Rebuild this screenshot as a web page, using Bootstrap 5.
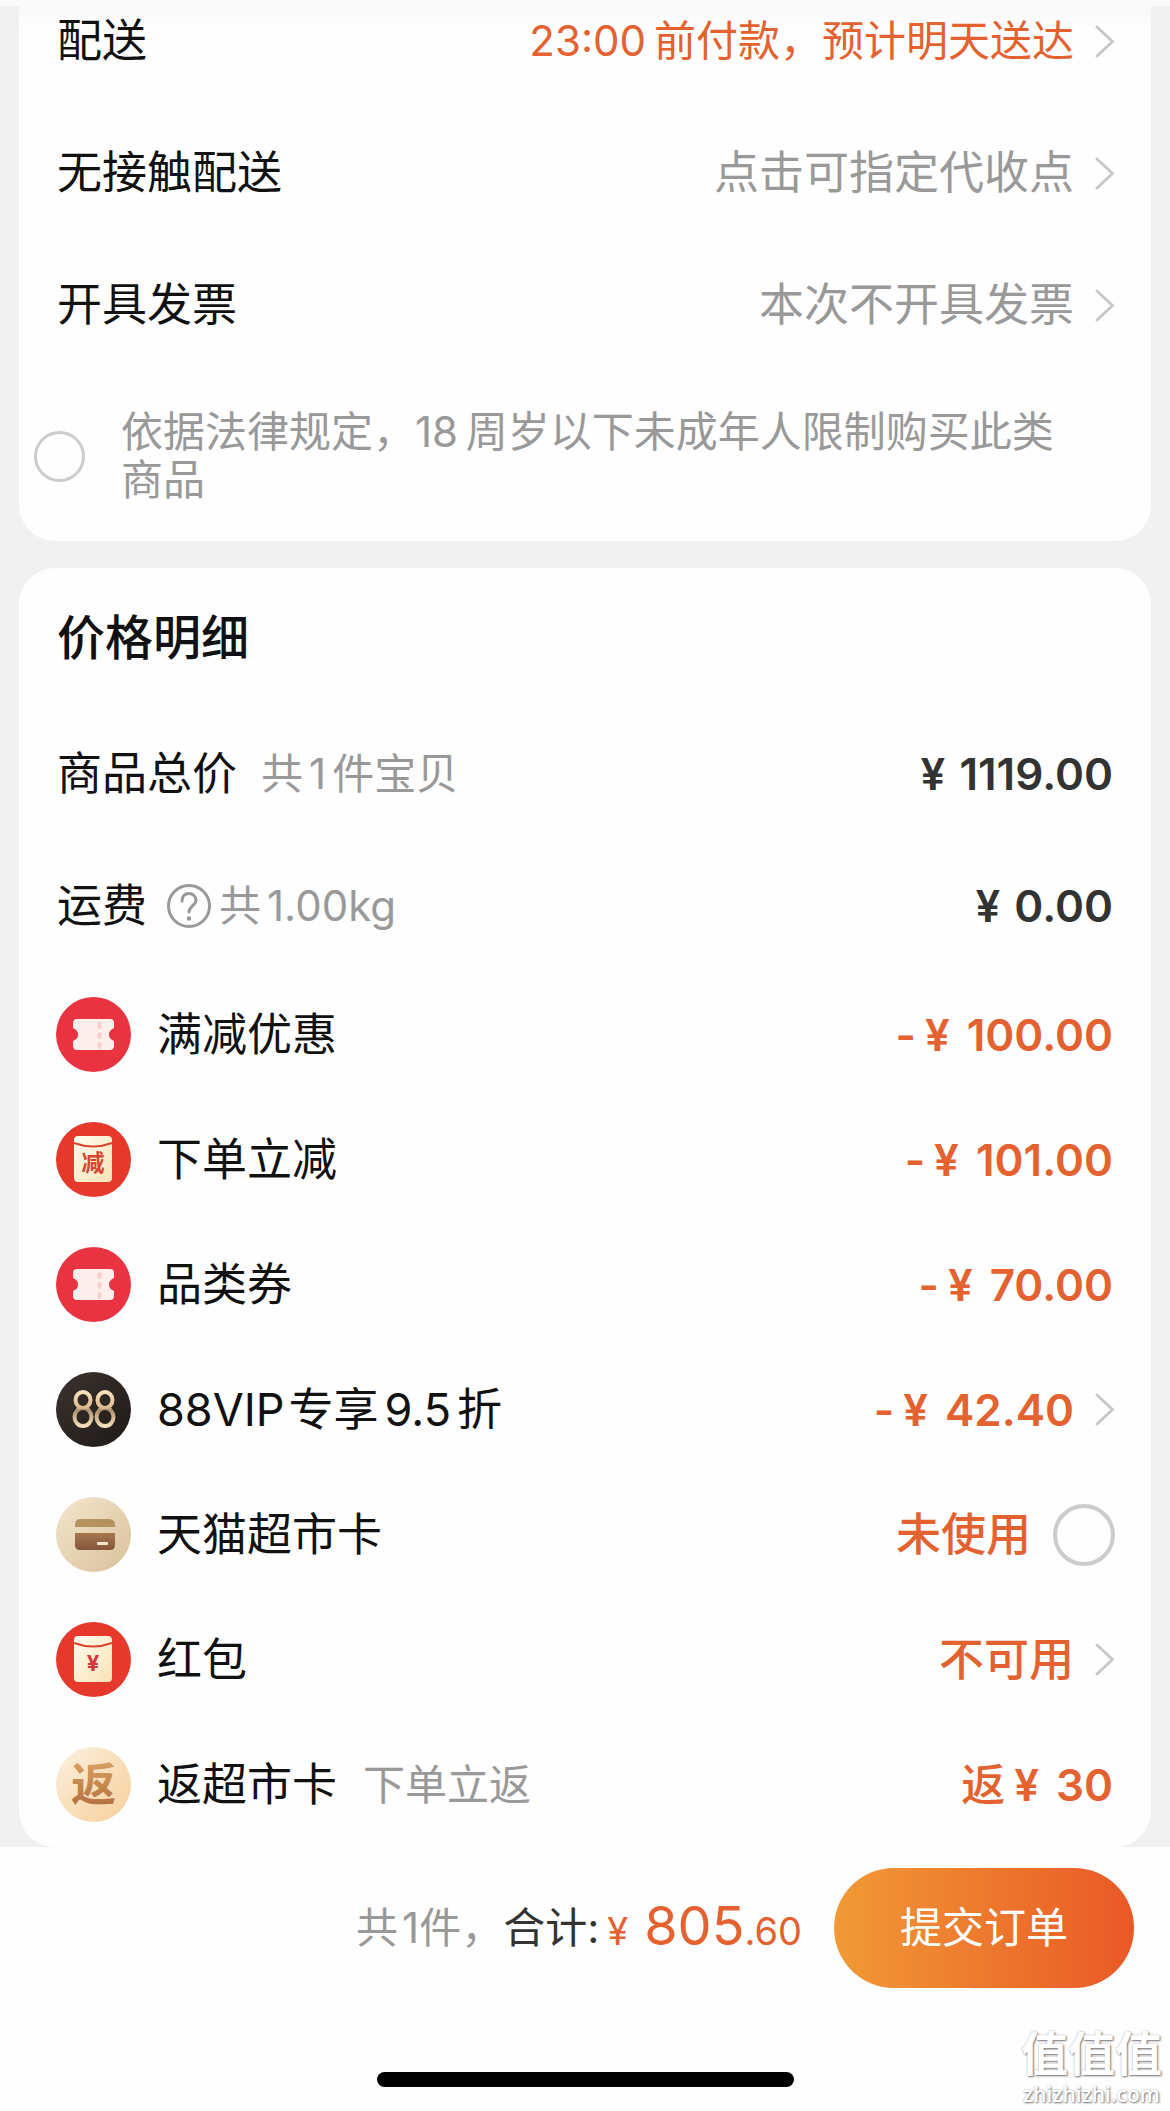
<!DOCTYPE html>
<html lang="zh-CN">
<head>
<meta charset="utf-8">
<meta name="viewport" content="width=device-width, initial-scale=1">
<title>确认订单</title>
<link href="https://cdn.jsdelivr.net/npm/bootstrap@5.3.0/dist/css/bootstrap.min.css" rel="stylesheet">
<style>
  :root { --accent: #e4622f; --muted: #999; --page: #f1f1f1; }
  body {
    font-family: Inter, "Noto Sans CJK SC", sans-serif;
    font-size: 45px; line-height: 70px; color: #111; background: #fefefe;
  }
  .top-strip { height: 6px; background: #fafafa; }
  .order-page { background: var(--page); padding: 0 19px; }
  .panel { background: #fefefe; border-radius: 36px; padding: 0 38px; }
  .panel-delivery {
    border-top-left-radius: 0; border-top-right-radius: 0; padding-bottom: 37px;
    background: linear-gradient(#f9f9f9, #fefefe 28px);
  }
  .panel-price { margin-top: 27px; padding-top: 35px; padding-bottom: 25px; }
  .stack-rows { display: grid; gap: 62px; }
  .stack-icons { display: grid; gap: 50px; margin-top: 56px; }
  .line-row { color: inherit; text-decoration: none; min-height: 70px; }
  .icon-row { min-height: 75px; gap: 26px; }
  .chev { width: 20px; height: 33px; margin-left: 21px; margin-right: -2px; flex: none; }
  .accent { color: var(--accent); }
  .muted { color: var(--muted); }
  .txt-md { font-size: 42px; }
  .num { margin: 0 6px; }
  .amount { font-size: 44px; font-weight: 600; }
  .amount .yen { margin: 0 17px 0 9px; }
  .amount.dark .yen { margin: 0 14px 0 0; }
  .state { font-weight: 500; }
  .dark { color: #333; }
  .round-icon { width: 75px; height: 75px; flex: none; margin-left: -1px; }
  .round-check {
    appearance: none; flex: none; width: 51px; height: 51px; margin: 0;
    border: 3px solid #ccc; border-radius: 50%; background: #fefefe;
  }
  .round-check:checked { background: var(--accent); }
  .round-check-lg { width: 62px; height: 62px; border-width: 4px; margin: 0 -2px 0 22px; }
  .age-row { margin: 68px 40px 0 -23px; gap: 36px; }
  .age-row label { font-size: 42px; line-height: 48px; }
  .panel-title { font-size: 48px; line-height: 70px; font-weight: 500; margin: 0 0 66px; }
  .help-btn { width: 44px; height: 44px; border: 0; padding: 0; margin-left: 20px; background: none; display: flex; }
  .pay-bar { padding: 21px 36px 0 0; gap: 32px; }
  .sum { font-size: 54px; }
  .small-sum { font-size: 38px; }
  .submit-btn {
    width: 300px; height: 120px; border: 0; border-radius: 60px; color: #fff;
    font-size: 42px; line-height: 60px;
    background: linear-gradient(90deg, #f19a36, #ea5826);
  }
  .bottom-zone { height: 122px; position: relative; }
  .home-bar { width: 417px; height: 15px; border-radius: 8px; background: #000; margin-top: 84px; }
  .site-mark {
    position: absolute; right: 8px; bottom: 2px; text-align: center; color: #fff;
    text-shadow: 1px 1px 2px #777, 0 0 2px #bbb;
  }
  .mark-cn { font-size: 47px; line-height: 52px; font-weight: 700; }
  .mark-en { font-family: "Open Sans", sans-serif; font-size: 21px; line-height: 28px; font-weight: 600; }
</style>
</head>
<body>
<svg class="position-absolute" width="0" height="0" aria-hidden="true">
  <defs>
    <linearGradient id="cream" x1="0" y1="0" x2="1" y2="1"><stop offset="0" stop-color="#fffdf0"/><stop offset="1" stop-color="#f8e2b4"/></linearGradient>
    <linearGradient id="black" x1="0" y1="0" x2="1" y2="1"><stop offset="0" stop-color="#3a322e"/><stop offset="1" stop-color="#1f1b18"/></linearGradient>
    <linearGradient id="gold" gradientUnits="userSpaceOnUse" x1="0" y1="19" x2="0" y2="55"><stop offset="0" stop-color="#fbe3bd"/><stop offset=".48" stop-color="#dcb98a"/><stop offset=".52" stop-color="#a98e6c"/><stop offset="1" stop-color="#fbe3bd"/></linearGradient>
    <linearGradient id="sand" x1="0" y1="0" x2="1" y2="1"><stop offset="0" stop-color="#f4e6cc"/><stop offset="1" stop-color="#d8c09b"/></linearGradient>
    <linearGradient id="brown" x1="0" y1="0" x2="0" y2="1"><stop offset="0" stop-color="#a67850"/><stop offset="1" stop-color="#85553c"/></linearGradient>
    <linearGradient id="peach" x1="0" y1="0" x2="1" y2="1"><stop offset="0" stop-color="#fbf0df"/><stop offset="1" stop-color="#f7cf9a"/></linearGradient>
    <linearGradient id="copper" x1="0" y1="0" x2="0" y2="1"><stop offset="0" stop-color="#dda465"/><stop offset="1" stop-color="#b06a3c"/></linearGradient>
    <symbol id="arrow" viewBox="0 0 20 33"><path d="M2 2 17.500 16.500 2 31" fill="none" stroke="#c8c8c8" stroke-width="3" stroke-linecap="round" stroke-linejoin="round"/></symbol>
    <symbol id="ticket" viewBox="0 0 75 75">
      <circle cx="37.500" cy="37.500" r="37.500" fill="#e93340"/>
      <path d="M21 22H54Q58 22 58 26V31Q53 33 53 37.500T58 44V49Q58 53 54 53H21Q17 53 17 49V44Q22 42 22 37.500T17 31V26Q17 22 21 22Z" fill="#fdf0ec"/>
      <path d="M43.500 27V50" stroke="#f9cdcb" stroke-width="4" stroke-linecap="round" stroke-dasharray="3 7"/>
    </symbol>
    <symbol id="envelope" viewBox="0 0 75 75">
      <circle cx="37.500" cy="37.500" r="37.500" fill="#e6382b"/>
      <rect x="18" y="14" width="38" height="46" rx="4" fill="url(#cream)"/>
      <path d="M18 21Q37 28 56 21" fill="none" stroke="#d9472f" stroke-width="2"/>
    </symbol>
  </defs>
</svg>

<div class="top-strip"></div>
<main class="order-page">
  <section class="panel panel-delivery">
    <div class="stack-rows">
      <a href="#" class="line-row d-flex align-items-center">
        <span class="me-auto">配送</span><span class="accent txt-md">23:00<span class="ms-2">前付款，预计明天送达</span></span><svg class="chev"><use href="#arrow"/></svg>
      </a>
      <a href="#" class="line-row d-flex align-items-center">
        <span class="me-auto">无接触配送</span><span class="muted">点击可指定代收点</span><svg class="chev"><use href="#arrow"/></svg>
      </a>
      <a href="#" class="line-row d-flex align-items-center">
        <span class="me-auto">开具发票</span><span class="muted">本次不开具发票</span><svg class="chev"><use href="#arrow"/></svg>
      </a>
    </div>
    <div class="age-row d-flex align-items-center">
      <input class="round-check" type="checkbox" id="age">
      <label class="muted" for="age">依据法律规定，18&thinsp;周岁以下未成年人限制购买此类商品</label>
    </div>
  </section>

  <section class="panel panel-price">
    <h2 class="panel-title">价格明细</h2>
    <div class="stack-rows">
      <div class="line-row d-flex align-items-center">
        <span>商品总价</span><span class="muted txt-md ms-4 me-auto">共<span class="num">1</span>件宝贝</span><span class="amount dark"><span class="yen">¥</span>1119.00</span>
      </div>
      <div class="line-row d-flex align-items-center">
        <span>运费</span>
        <button type="button" class="help-btn" aria-label="运费说明">
          <svg width="44" height="44" viewBox="0 0 44 44" fill="none" stroke="#999" stroke-width="3" stroke-linecap="round"><circle cx="22" cy="22" r="20.500"/><path d="M15 17C15 12 18 9.500 22 9.500S29 12.500 29 16.500C29 21 22 22 22 28"/><circle cx="22" cy="34.500" r="1.500" fill="#999" stroke-width="1.500"/></svg>
        </button>
        <span class="muted txt-md ms-2 me-auto">共<span class="num">1.00kg</span></span><span class="amount dark"><span class="yen">¥</span>0.00</span>
      </div>
    </div>
    <div class="stack-icons">
      <div class="icon-row d-flex align-items-center">
        <svg class="round-icon"><use href="#ticket"/></svg><span class="me-auto">满减优惠</span><span class="amount accent">-<span class="yen">¥</span>100.00</span>
      </div>
      <div class="icon-row d-flex align-items-center">
        <svg class="round-icon" viewBox="0 0 75 75"><use href="#envelope"/><text x="37" y="49" text-anchor="middle" font-size="23" font-weight="700" fill="#d8452f">减</text></svg><span class="me-auto">下单立减</span><span class="amount accent">-<span class="yen">¥</span>101.00</span>
      </div>
      <div class="icon-row d-flex align-items-center">
        <svg class="round-icon"><use href="#ticket"/></svg><span class="me-auto">品类券</span><span class="amount accent">-<span class="yen">¥</span>70.00</span>
      </div>
      <div class="icon-row d-flex align-items-center">
        <svg class="round-icon" viewBox="0 0 75 75"><circle cx="37.500" cy="37.500" r="37.500" fill="url(#black)"/><g fill="none" stroke="url(#gold)" stroke-width="4"><ellipse cx="27" cy="28" rx="7.500" ry="8"/><ellipse cx="27" cy="45" rx="8.500" ry="9"/><ellipse cx="49" cy="28" rx="7.500" ry="8"/><ellipse cx="49" cy="45" rx="8.500" ry="9"/></g></svg>
        <span class="me-auto">88VIP<span class="ms-1">专享</span><span class="num">9.5</span>折</span>
        <a href="#" class="line-row d-flex align-items-center"><span class="amount accent">-<span class="yen">¥</span>42.40</span><svg class="chev"><use href="#arrow"/></svg></a>
      </div>
      <div class="icon-row d-flex align-items-center">
        <svg class="round-icon" viewBox="0 0 75 75"><circle cx="37.500" cy="37.500" r="37.500" fill="url(#sand)"/><path d="M24 22H53Q59 22 59 28V30H19V28Q19 22 24 22Z" fill="#b4935f"/><path d="M19 36H59V48Q59 53 54 53H24Q19 53 19 48Z" fill="url(#brown)"/><rect x="41" y="45" width="11" height="3" rx="1" fill="#f4e6cc"/></svg>
        <label class="me-auto" for="tcard">天猫超市卡</label>
        <div class="d-flex align-items-center"><span class="state accent">未使用</span><input class="round-check round-check-lg" type="checkbox" id="tcard"></div>
      </div>
      <div class="icon-row d-flex align-items-center">
        <svg class="round-icon" viewBox="0 0 75 75"><use href="#envelope"/><text x="37" y="49" text-anchor="middle" font-size="22" font-weight="700" fill="#d8343a">¥</text></svg><span class="me-auto">红包</span>
        <a href="#" class="line-row d-flex align-items-center"><span class="state accent">不可用</span><svg class="chev"><use href="#arrow"/></svg></a>
      </div>
      <div class="icon-row d-flex align-items-center">
        <svg class="round-icon" viewBox="0 0 75 75"><circle cx="37.500" cy="37.500" r="37.500" fill="url(#peach)"/><text x="37.500" y="54" text-anchor="middle" font-size="45" font-weight="700" fill="url(#copper)">返</text></svg>
        <span>返超市卡</span><span class="muted txt-md me-auto">下单立返</span><span class="amount accent"><span class="state">返</span><span class="yen">¥</span>30</span>
      </div>
    </div>
  </section>
</main>

<footer>
  <div class="pay-bar d-flex align-items-center justify-content-end">
    <div class="txt-md d-flex align-items-center">
      <span class="muted">共<span class="ms-1">1</span>件，</span><span class="dark">合计:</span>
      <div class="accent d-flex align-items-baseline ms-2">
        <span class="small-sum me-3">¥</span><span class="sum">805</span><span class="small-sum">.60</span>
      </div>
    </div>
    <button type="button" class="submit-btn">提交订单</button>
  </div>
  <div class="bottom-zone d-flex justify-content-center">
    <div class="home-bar"></div>
    <div class="site-mark"><div class="mark-cn">值值值</div><div class="mark-en">zhizhizhi.com</div></div>
  </div>
</footer>
<script src="https://cdn.jsdelivr.net/npm/bootstrap@5.3.0/dist/js/bootstrap.bundle.min.js"></script>
</body>
</html>
